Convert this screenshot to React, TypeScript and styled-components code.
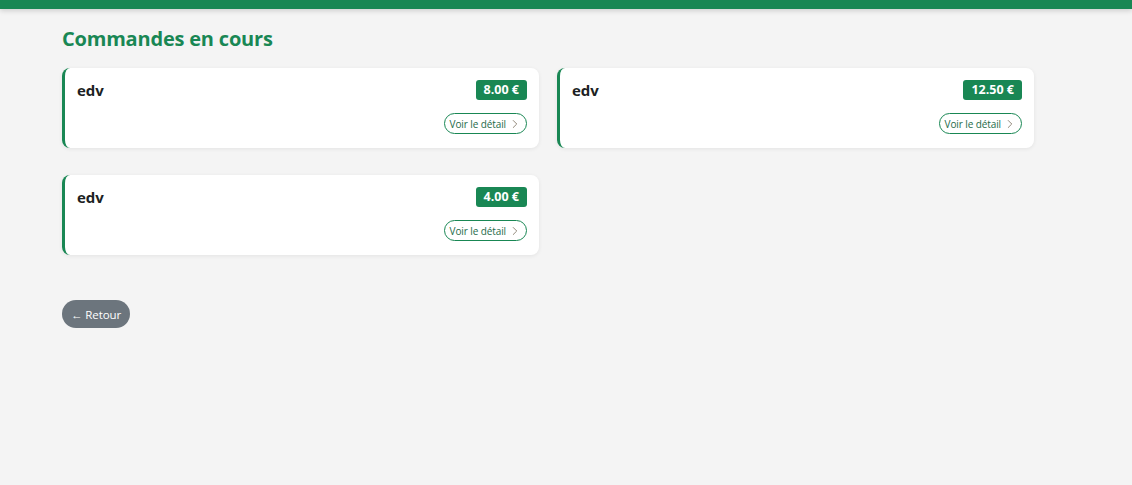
import React from 'react'
import styled, { createGlobalStyle } from 'styled-components'
import { ChevronRight } from 'lucide-react'

const GlobalStyle = createGlobalStyle`
    body {
        margin: 0;
        background: #f4f4f4;
        font-family: "Open Sans", "Noto Sans", sans-serif;
        color: #212529;
    }
`

const TopBar = styled.div`
    height: 9px;
    background: #198754;
    box-shadow: 0 2px 5px rgba(0, 0, 0, 0.15);
`

const Main = styled.main`
    width: 972px;
    padding: 18px 0 0 62px;
`

const Title = styled.h2`
    margin: 0 0 17px 0;
    color: #198754;
    font-size: 20px;
    font-weight: 700;
    line-height: 24px;
    letter-spacing: -0.2px;
`

const Grid = styled.div`
    display: grid;
    grid-template-columns: 477px 477px;
    column-gap: 18px;
    row-gap: 27px;
`

const Card = styled.div`
    box-sizing: border-box;
    height: 80px;
    background: #ffffff;
    border-left: 3px solid #198754;
    border-radius: 8px;
    box-shadow: 0 1px 4px rgba(0, 0, 0, 0.07);
    padding: 12px 12px 14px 12px;
    display: flex;
    flex-direction: column;
    justify-content: space-between;
`

const CardHead = styled.div`
    display: flex;
    align-items: center;
    justify-content: space-between;
`

const Name = styled.div`
    font-size: 15px;
    font-weight: 700;
    color: #1c1f23;
`

const Price = styled.span`
    background: #198754;
    color: #ffffff;
    font-size: 12.5px;
    font-weight: 700;
    line-height: 20px;
    padding: 0 8px;
    border-radius: 3px;
`

const DetailButton = styled.button`
    align-self: flex-end;
    display: flex;
    align-items: center;
    gap: 2px;
    height: 21px;
    padding: 0 4px 0 5px;
    background: transparent;
    border: 1px solid #198754;
    border-radius: 11px;
    color: #1e6b4a;
    font-family: inherit;
    font-size: 10px;
    letter-spacing: -0.1px;
    cursor: pointer;

    svg {
        color: #7a6f5e;
    }
`

const BackButton = styled.button`
    margin-top: 45px;
    height: 28px;
    padding: 0 9px;
    background: #6c757d;
    color: #ffffff;
    border: none;
    border-radius: 14px;
    font-family: inherit;
    font-size: 11.5px;
    letter-spacing: -0.1px;
    cursor: pointer;
`

interface Order {
    id: number
    name: string
    total: string
}

const orders: Order[] = [
    { id: 1, name: 'edv', total: '8.00 €' },
    { id: 2, name: 'edv', total: '12.50 €' },
    { id: 3, name: 'edv', total: '4.00 €' },
]

const OrderCard = ({ order }: { order: Order }): JSX.Element => (
    <Card>
        <CardHead>
            <Name>{order.name}</Name>
            <Price>{order.total}</Price>
        </CardHead>
        <DetailButton>
            Voir le détail
            <ChevronRight size={14} strokeWidth={1.4} />
        </DetailButton>
    </Card>
)

export default function App(): JSX.Element {
    return (
        <>
            <GlobalStyle />
            <TopBar />
            <Main>
                <Title>Commandes en cours</Title>
                <Grid>
                    {orders.map((order) => (
                        <OrderCard order={order} key={order.id} />
                    ))}
                </Grid>
                <BackButton>← Retour</BackButton>
            </Main>
        </>
    )
}
